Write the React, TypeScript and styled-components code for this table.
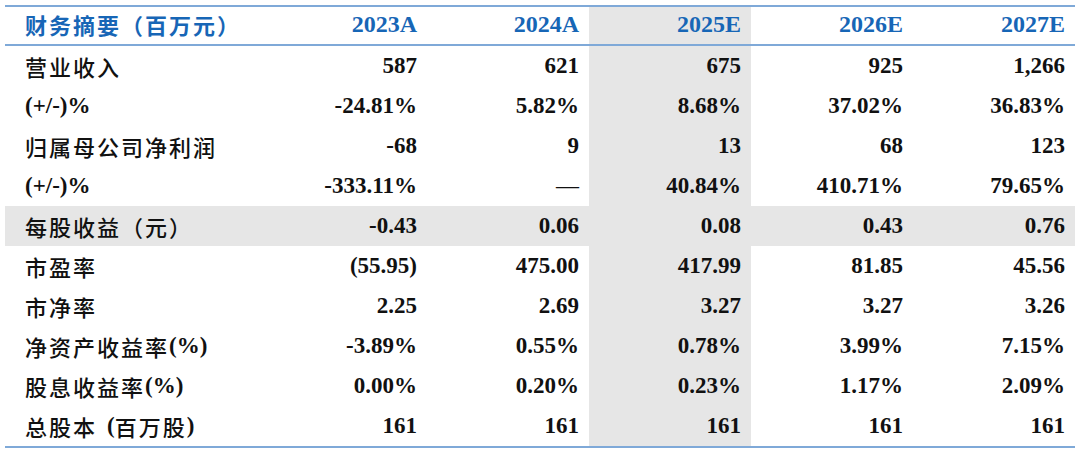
import styled, { createGlobalStyle } from "styled-components";

const GlobalStyle = createGlobalStyle`
  html, body {
    margin: 0;
    padding: 0;
    background: #ffffff;
  }
`;

const Page = styled.div`
  padding: 5px 0 0 5px;
  width: 1080px;
  height: 451px;
  box-sizing: border-box;
  font-family: "Liberation Serif", "Noto Sans CJK SC", serif;
`;

const Table = styled.div`
  display: flex;
  flex-direction: column;
  width: 1070px;
  border-bottom: 2px solid #7fa9d8;
`;

const Row = styled.div<{ $header?: boolean; $shaded?: boolean }>`
  display: grid;
  grid-template-columns: 260px repeat(5, 162px);
  height: ${(p) => (p.$header ? "37px" : "40px")};
  background: ${(p) => (p.$shaded ? "#e6e6e6" : "transparent")};
  border-top: ${(p) => (p.$header ? "2px solid #7fa9d8" : "none")};
  border-bottom: ${(p) => (p.$header ? "2px solid #7fa9d8" : "none")};
`;

const Label = styled.div<{ $header?: boolean }>`
  display: flex;
  align-items: center;
  padding-left: 20px;
  padding-bottom: ${(p) => (p.$header ? "3px" : "0")};
  font-size: 22px;
  letter-spacing: 2px;
  font-weight: ${(p) => (p.$header ? 700 : 500)};
  color: ${(p) => (p.$header ? "#1766b6" : "#111111")};
  white-space: pre;
`;

const Latin = styled.span`
  font-family: "Liberation Serif", serif;
  font-weight: 700;
  font-size: 23px;
  letter-spacing: 0;
`;

const Gap = styled.span`
  display: inline-block;
  width: 10px;
`;

const Cell = styled.div<{ $header?: boolean; $shaded?: boolean }>`
  display: flex;
  align-items: center;
  justify-content: flex-end;
  padding-right: 10px;
  padding-bottom: ${(p) => (p.$header ? "3px" : "0")};
  font-size: ${(p) => (p.$header ? "24px" : "23px")};
  font-weight: 700;
  color: ${(p) => (p.$header ? "#1766b6" : "#111111")};
  background: ${(p) => (p.$shaded ? "#e6e6e6" : "transparent")};
`;

const Dash = styled.span`
  font-weight: 400;
`;

type Line = { label: React.ReactNode; values: string[]; shaded?: boolean };

const years = ["2023A", "2024A", "2025E", "2026E", "2027E"];

const lines: Line[] = [
  { label: "营业收入", values: ["587", "621", "675", "925", "1,266"] },
  { label: <Latin>(+/-)%</Latin>, values: ["-24.81%", "5.82%", "8.68%", "37.02%", "36.83%"] },
  { label: "归属母公司净利润", values: ["-68", "9", "13", "68", "123"] },
  { label: <Latin>(+/-)%</Latin>, values: ["-333.11%", "—", "40.84%", "410.71%", "79.65%"] },
  { label: "每股收益（元）", values: ["-0.43", "0.06", "0.08", "0.43", "0.76"], shaded: true },
  { label: "市盈率", values: ["(55.95)", "475.00", "417.99", "81.85", "45.56"] },
  { label: "市净率", values: ["2.25", "2.69", "3.27", "3.27", "3.26"] },
  {
    label: (
      <>
        净资产收益率<Latin>(%)</Latin>
      </>
    ),
    values: ["-3.89%", "0.55%", "0.78%", "3.99%", "7.15%"],
  },
  {
    label: (
      <>
        股息收益率<Latin>(%)</Latin>
      </>
    ),
    values: ["0.00%", "0.20%", "0.23%", "1.17%", "2.09%"],
  },
  {
    label: (
      <>
        总股本<Gap />
        <Latin>(</Latin>百万股<Latin>)</Latin>
      </>
    ),
    values: ["161", "161", "161", "161", "161"],
  },
];

function App() {
  return (
    <>
      <GlobalStyle />
      <Page>
        <Table>
          <Row $header>
            <Label $header>财务摘要（百万元）</Label>
            {years.map((y, i) => (
              <Cell key={y} $header $shaded={i === 2}>
                {y}
              </Cell>
            ))}
          </Row>
          {lines.map((line, r) => (
            <Row key={r} $shaded={line.shaded}>
              <Label>{line.label}</Label>
              {line.values.map((v, i) => (
                <Cell key={i} $shaded={i === 2}>
                  {v === "—" ? <Dash>{v}</Dash> : v}
                </Cell>
              ))}
            </Row>
          ))}
        </Table>
      </Page>
    </>
  );
}

export default App;
